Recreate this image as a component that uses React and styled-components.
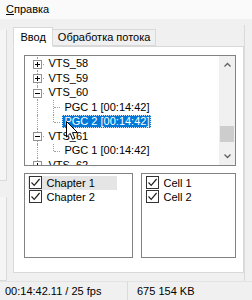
import React from 'react'
import styled, { createGlobalStyle, css } from 'styled-components'

const GlobalStyle = createGlobalStyle`
  html, body {
    margin: 0;
    padding: 0;
    background: #f0f0f0;
  }
  body {
    font-family: "Liberation Sans", Arial, sans-serif;
    font-size: 11px;
    color: #000;
  }
`

const Window = styled.div`
  width: 252px;
  height: 300px;
  display: flex;
  flex-direction: column;
  overflow: hidden;
  background: #f0f0f0;
`

const MenuBar = styled.div`
  height: 19px;
  display: flex;
  align-items: center;
  padding-left: 6px;
  background: #fafafa;
`

const MenuItem = styled.span`
  u { text-decoration: underline; }
`

const Main = styled.div`
  flex: 1;
  display: flex;
`

const LeftPane = styled.div`
  width: 8px;
  display: flex;
  flex-direction: column;
  gap: 16px;
  padding-top: 11px;
  box-sizing: border-box;
`

const SideBox = styled.div`
  height: ${p => p.h}px;
  background: #f5f5f5;
  border-right: 1px solid #dadada;
  border-bottom: 1px solid #dadada;
`

const Center = styled.div`
  flex: 1;
  padding: 8px 0 0 6px;
  display: flex;
  flex-direction: column;
`

const RightPane = styled.div`
  width: 8px;
  margin-top: 6px;
  border-left: 1px solid #dadada;
  box-sizing: border-box;
`

const TabStrip = styled.div`
  display: flex;
  align-items: flex-end;
  height: 19px;
  position: relative;
  z-index: 1;
`

const Tab = styled.div`
  box-sizing: border-box;
  border: 1px solid #d9d9d9;
  display: flex;
  align-items: center;
  ${p => p.active ? css`
    height: 20px;
    margin-bottom: -1px;
    padding: 0 6px;
    background: #fff;
    border-bottom-color: #fff;
  ` : css`
    height: 17px;
    padding: 0 5px;
    background: #f0f0f0;
    border-left: none;
  `}
`

const TabPanel = styled.div`
  width: 231px;
  height: 227px;
  box-sizing: border-box;
  background: #fff;
  border: 1px solid #d9d9d9;
  padding: 8px 7px 0 10px;
  display: flex;
  flex-direction: column;
  gap: 7px;
`

const TreeBox = styled.div`
  height: 111px;
  box-sizing: border-box;
  border: 1px solid #828282;
  display: flex;
  position: relative;
`

const TreeBody = styled.div`
  flex: 1;
  overflow: hidden;
  padding-top: 1px;
`

const Row = styled.div`
  height: 14.5px;
  display: flex;
  align-items: stretch;
  white-space: nowrap;
`

const Guide = styled.span`
  position: relative;
  width: 16px;
  flex: none;
  margin-left: ${p => p.first ? 4 : 0}px;
  &::before {
    content: '';
    display: ${p => p.line ? 'block' : 'none'};
    position: absolute;
    left: 8px;
    top: 0;
    bottom: ${p => p.half ? '50%' : '0'};
    border-left: 1px dotted #a0a0a0;
  }
  &::after {
    content: '';
    display: ${p => p.branch ? 'block' : 'none'};
    position: absolute;
    left: 9px;
    right: 1px;
    top: 50%;
    border-top: 1px dotted #a0a0a0;
  }
`

const Expander = styled.span`
  position: absolute;
  z-index: 1;
  left: 4px;
  top: calc(50% - 4px);
  width: 9px;
  height: 9px;
  box-sizing: border-box;
  border: 1px solid #919191;
  background: #fff;
  &::before, &::after {
    content: '';
    position: absolute;
    background: #000;
  }
  &::before { left: 1px; top: 3px; width: 5px; height: 1px; }
  &::after {
    display: ${p => p.open ? 'none' : 'block'};
    left: 3px; top: 1px; width: 1px; height: 5px;
  }
`

const Label = styled.span`
  align-self: center;
  line-height: 13px;
  padding: 0 2px;
  margin-left: 1px;
  ${p => p.selected && css`
    background: #0078d7;
    color: #fff;
    outline: 1px dotted #cfe4f7;
    outline-offset: -1px;
  `}
`

const ScrollBar = styled.div`
  width: 16px;
  background: #f0f0f0;
  display: flex;
  flex-direction: column;
  align-items: center;
`

const Arrow = styled.div`
  height: 17px;
  width: 100%;
  display: flex;
  align-items: center;
  justify-content: center;
`

const Track = styled.div`
  flex: 1;
  width: 100%;
  padding-top: 53px;
  box-sizing: border-box;
`

const Thumb = styled.div`
  height: 16px;
  margin: 0 1px;
  background: #cdcdcd;
`

const Lists = styled.div`
  display: flex;
  gap: 8px;
`

const ListBox = styled.div`
  width: ${p => p.w}px;
  height: 85px;
  box-sizing: border-box;
  border: 1px solid #828282;
  padding: 2px 0 0 3px;
  display: flex;
  flex-direction: column;
`

const ListRow = styled.div`
  height: 14px;
  width: ${p => p.w}px;
  display: flex;
  align-items: center;
  gap: 4px;
  padding-left: 1px;
  background: ${p => p.hl ? '#e5e5e5' : 'transparent'};
`

const Check = styled.span`
  width: 13px;
  height: 13px;
  box-sizing: border-box;
  border: 1px solid #333;
  background: #fff;
  display: flex;
  align-items: center;
  justify-content: center;
`

const StatusBar = styled.div`
  height: 20px;
  display: flex;
  align-items: center;
  border-top: 1px solid #e3e3e3;
  box-sizing: border-box;
`

const StatusCell = styled.div`
  width: ${p => p.w ? p.w + 'px' : 'auto'};
  height: 100%;
  display: flex;
  align-items: center;
  padding-left: ${p => p.pl}px;
  box-sizing: border-box;
  border-right: ${p => p.sep ? '1px solid #dadada' : 'none'};
`

const Cursor = styled.svg`
  position: absolute;
  left: 41px;
  top: 65px;
  z-index: 3;
`

const Chevron = ({ up }) => (
  <svg width="7" height="5" viewBox="0 0 7 5">
    <path d={up ? 'M0.5 4.5 L3.5 1.5 L6.5 4.5' : 'M0.5 0.5 L3.5 3.5 L6.5 0.5'} fill="none" stroke="#606060" strokeWidth="1.3" />
  </svg>
)

const Tick = () => (
  <svg width="11" height="11" viewBox="0 0 11 11">
    <path d="M1.5 5.5 L4.2 8.3 L9.6 2" fill="none" stroke="#202020" strokeWidth="1.2" />
  </svg>
)

const tree = [
  { level: 0, text: 'VTS_58', box: 'plus' },
  { level: 0, text: 'VTS_59', box: 'plus' },
  { level: 0, text: 'VTS_60', box: 'minus' },
  { level: 1, text: 'PGC 1 [00:14:42]' },
  { level: 1, text: 'PGC 2 [00:14:42]', last: true, selected: true },
  { level: 0, text: 'VTS_61', box: 'minus' },
  { level: 1, text: 'PGC 1 [00:14:42]', last: true },
  { level: 0, text: 'VTS_62', box: 'plus' },
]

const TreeRow = ({ node }) => (
  <Row>
    {node.level === 1 && <Guide first line />}
    <Guide first={node.level === 0} line branch half={node.last}>
      {node.box && <Expander open={node.box === 'minus'} />}
    </Guide>
    <Label selected={node.selected}>{node.text}</Label>
  </Row>
)

export default function App() {
  return (
    <Window>
      <GlobalStyle />
      <MenuBar>
        <MenuItem><u>С</u>правка</MenuItem>
      </MenuBar>
      <Main>
        <LeftPane>
          <SideBox h={150} />
          <SideBox h={83} />
        </LeftPane>
        <Center>
          <TabStrip>
            <Tab active>Ввод</Tab>
            <Tab>Обработка потока</Tab>
          </TabStrip>
          <TabPanel>
            <TreeBox>
              <TreeBody>
                {tree.map((n, i) => <TreeRow key={i} node={n} />)}
              </TreeBody>
              <ScrollBar>
                <Arrow><Chevron up /></Arrow>
                <Track><Thumb /></Track>
                <Arrow><Chevron /></Arrow>
              </ScrollBar>
              <Cursor width="13" height="20" viewBox="0 0 13 20">
                <path d="M0.5 0.5 L0.5 16 L4.2 12.4 L6.6 18.3 L8.9 17.3 L6.5 11.6 L11.6 11.6 Z" fill="#fff" stroke="#000" strokeWidth="1" strokeLinejoin="round" />
              </Cursor>
            </TreeBox>
            <Lists>
              <ListBox w={109}>
                <ListRow w={88} hl><Check><Tick /></Check>Chapter 1</ListRow>
                <ListRow w={88}><Check><Tick /></Check>Chapter 2</ListRow>
              </ListBox>
              <ListBox w={95}>
                <ListRow w={70}><Check><Tick /></Check>Cell 1</ListRow>
                <ListRow w={70}><Check><Tick /></Check>Cell 2</ListRow>
              </ListBox>
            </Lists>
          </TabPanel>
        </Center>
        <RightPane />
      </Main>
      <StatusBar>
        <StatusCell w={128} pl={5} sep>00:14:42.11 / 25 fps</StatusCell>
        <StatusCell pl={9}>675 154 KB</StatusCell>
      </StatusBar>
    </Window>
  )
}
